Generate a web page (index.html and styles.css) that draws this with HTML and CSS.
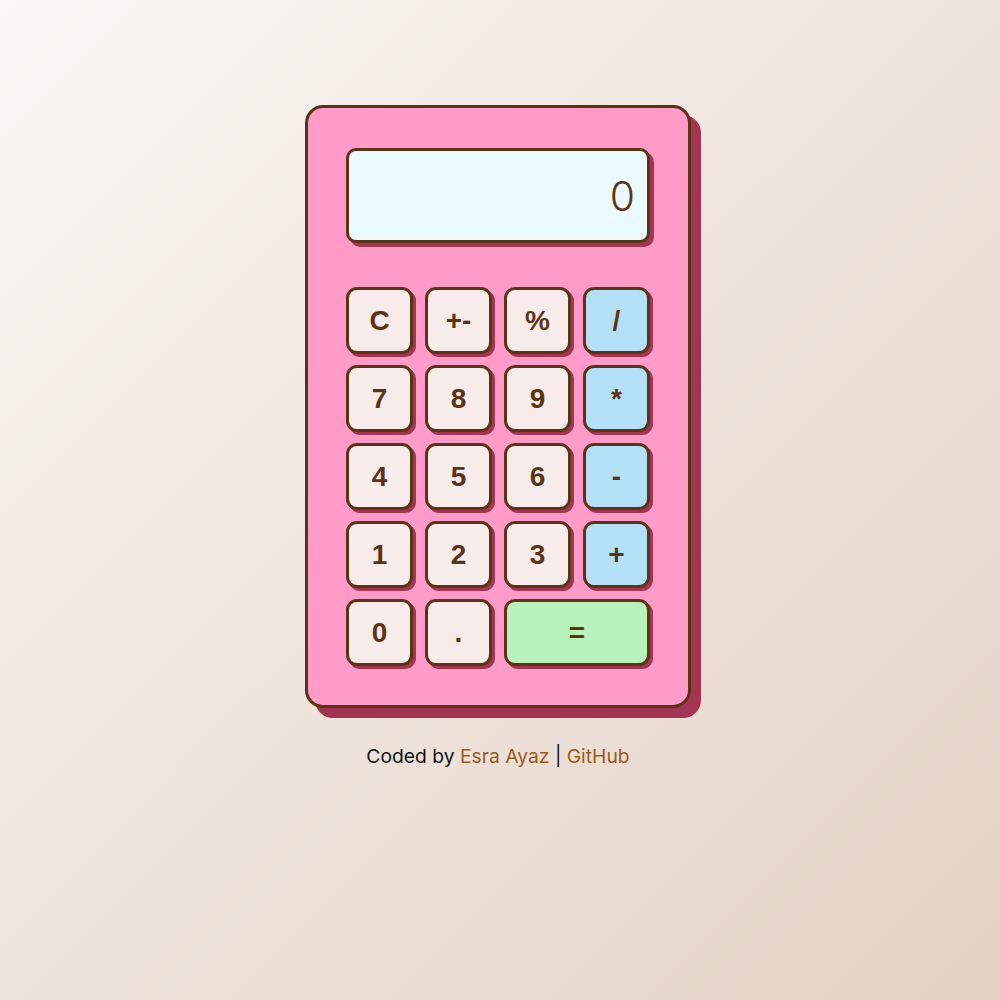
FILE: index.html
```html
<!DOCTYPE html>
<html lang="en">
<head>
<meta charset="utf-8">
<title>Calculator</title>
<link rel="stylesheet" href="styles.css">
</head>
<body>
<main class="page">
  <div class="calculator">
    <div class="display">0</div>
    <div class="keys">
      <button class="key">C</button>
      <button class="key">+-</button>
      <button class="key">%</button>
      <button class="key op">/</button>
      <button class="key">7</button>
      <button class="key">8</button>
      <button class="key">9</button>
      <button class="key op">*</button>
      <button class="key">4</button>
      <button class="key">5</button>
      <button class="key">6</button>
      <button class="key op">-</button>
      <button class="key">1</button>
      <button class="key">2</button>
      <button class="key">3</button>
      <button class="key op">+</button>
      <button class="key">0</button>
      <button class="key">.</button>
      <button class="key equals">=</button>
    </div>
  </div>
  <p class="credit">Coded by <a href="#">Esra Ayaz</a> | <a href="#">GitHub</a></p>
</main>
</body>
</html>
```
FILE: styles.css
```css
* { box-sizing: border-box; }
html, body { margin: 0; padding: 0; }
body {
  min-height: 100vh;
  background: linear-gradient(135deg, #faf7f4 0%, #e3d1c4 100%);
  font-family: "Inter", "Liberation Sans", sans-serif;
}
.page {
  display: flex;
  flex-direction: column;
  align-items: center;
  padding-top: 105px;
  padding-right: 4px;
}
.calculator {
  width: 386px;
  background: #ff9bc8;
  border: 3px solid #5a3417;
  border-radius: 18px;
  box-shadow: 10px 10px 0 #a33552;
  padding: 40px 38px 39px;
}
.display {
  height: 95px;
  background: #ebfaff;
  border: 3px solid #5a3417;
  border-radius: 10px;
  box-shadow: 4px 4px 0 #a33552;
  display: flex;
  align-items: center;
  justify-content: flex-end;
  padding-right: 12px;
  font-family: "Inter", sans-serif;
  font-weight: 300;
  font-size: 41px;
  color: #5a3417;
  margin-bottom: 44px;
}
.keys {
  display: grid;
  grid-template-columns: repeat(4, 1fr);
  grid-auto-rows: 67px;
  gap: 11px 12px;
}
.key {
  background: #f8ecea;
  border: 3px solid #5a3417;
  border-radius: 11px;
  box-shadow: 3px 3px 0 #a33552;
  font-family: "Liberation Sans", Arial, sans-serif;
  font-weight: 700;
  font-size: 28px;
  color: #5a3417;
  padding: 0;
  cursor: pointer;
}
.key.op { background: #b3e0f7; }
.key.equals { background: #b9f2bb; grid-column: span 2; }
.credit {
  margin: 36px 0 0;
  font-size: 19.3px;
  color: #111;
}
.credit a {
  color: #9b5a1c;
  text-decoration: none;
}
```
